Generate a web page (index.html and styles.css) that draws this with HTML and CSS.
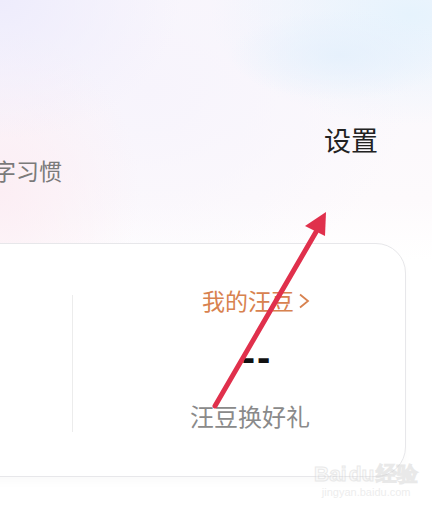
FILE: index.html
```html
<!DOCTYPE html>
<html lang="zh">
<head>
<meta charset="utf-8">
<link rel="stylesheet" href="styles.css">
</head>
<body>
<div class="page">
  <div class="hero">
    <div class="habit">字习惯</div>
    <div class="settings">设置</div>
  </div>
  <div class="card">
    <div class="col-left"></div>
    <div class="divider"></div>
    <div class="col-right">
      <div class="beans-title">我的汪豆<svg class="chev" width="13" height="16" viewBox="0 0 13 16"><polyline points="3,1.5 11,8 3,14.5" fill="none" stroke="#d8824f" stroke-width="1.8" stroke-linejoin="miter"/></svg></div>
      <div class="beans-value">--</div>
      <div class="beans-sub">汪豆换好礼</div>
    </div>
  </div>
  <svg class="arrow" width="432" height="512" viewBox="0 0 432 512">
    <line x1="215" y1="406" x2="316" y2="232" stroke="#e0304c" stroke-width="5" stroke-linecap="round"/>
    <polygon points="326,212 305,226 325,236" fill="#e0304c"/>
  </svg>
  <div class="watermark">
    <div class="wm-logo">Bai<span class="wm-du">du</span>经验</div>
    <div class="wm-url">jingyan.baidu.com</div>
  </div>
</div>
</body>
</html>
```
FILE: styles.css
```css
html, body {
  margin: 0;
  padding: 0;
}
body {
  width: 432px;
  height: 512px;
  overflow: hidden;
  font-family: "Noto Sans CJK SC", "Noto Sans", sans-serif;
  background: #ffffff;
}
.page {
  position: relative;
  width: 432px;
  height: 512px;
  overflow: hidden;
  background:
    radial-gradient(ellipse 110px 45px at 340px 55px, rgba(228, 240, 252, 0.8), rgba(228, 240, 252, 0) 100%),
    radial-gradient(ellipse 200px 110px at 410px 15px, rgba(230, 243, 253, 1), rgba(230, 243, 253, 0) 100%),
    radial-gradient(ellipse 180px 140px at 0px 0px, rgba(238, 236, 252, 1), rgba(238, 236, 252, 0) 100%),
    radial-gradient(ellipse 140px 160px at 0px 190px, rgba(252, 238, 244, 1), rgba(252, 238, 244, 0) 100%),
    radial-gradient(ellipse 260px 200px at 150px 90px, rgba(247, 244, 252, 1), rgba(247, 244, 252, 0) 100%),
    linear-gradient(180deg, #f9f7fc 0px, #fdfafc 200px, #ffffff 260px);
}
.hero {
  height: 243px;
  display: flex;
  justify-content: space-between;
  align-items: flex-start;
  padding-top: 122px;
  box-sizing: border-box;
}
.habit {
  margin-top: 33px;
  margin-left: -7px;
  font-size: 23px;
  line-height: 30px;
  color: #7a7a7a;
}
.settings {
  margin-right: 54px;
  font-size: 27px;
  line-height: 36px;
  color: #222222;
}
.card {
  margin-left: -40px;
  width: 446px;
  height: 234px;
  box-sizing: border-box;
  border: 1px solid #e7e7ea;
  border-radius: 30px;
  background: #ffffff;
  display: flex;
  align-items: flex-start;
  box-shadow: 0 6px 10px rgba(0, 0, 0, 0.02);
}
.col-left {
  width: 111px;
}
.divider {
  width: 1px;
  height: 137px;
  margin-top: 51px;
  background: #ececec;
}
.col-right {
  flex: 1;
  padding-left: 22px;
  padding-top: 41px;
  display: flex;
  flex-direction: column;
  align-items: center;
}
.beans-title {
  display: flex;
  align-items: center;
  font-size: 23px;
  line-height: 30px;
  color: #d8824f;
  margin-left: 12px;
}
.chev {
  margin-left: 3px;
  margin-top: 1px;
}
.beans-value {
  margin-top: 22px;
  font-family: "Liberation Sans", sans-serif;
  font-weight: bold;
  font-size: 40px;
  line-height: 40px;
  letter-spacing: 2px;
  color: #111111;
  margin-left: 14px;
}
.beans-sub {
  margin-top: 24px;
  font-size: 24px;
  line-height: 30px;
  color: #8a8a8a;
}
.arrow {
  position: absolute;
  left: 0;
  top: 0;
}
.watermark {
  position: absolute;
  left: 314px;
  top: 463px;
  text-align: center;
  opacity: 0.45;
}
.wm-logo {
  font-family: "Liberation Sans", sans-serif;
  font-size: 21px;
  font-weight: bold;
  line-height: 22px;
  color: #f6f6f6;
  -webkit-text-stroke: 1px #d0d0d0;
}
.wm-du {
  margin: 0 2px;
}
.wm-url {
  font-family: "Liberation Sans", sans-serif;
  font-size: 11px;
  line-height: 14px;
  color: #d8d8d8;
}
```
